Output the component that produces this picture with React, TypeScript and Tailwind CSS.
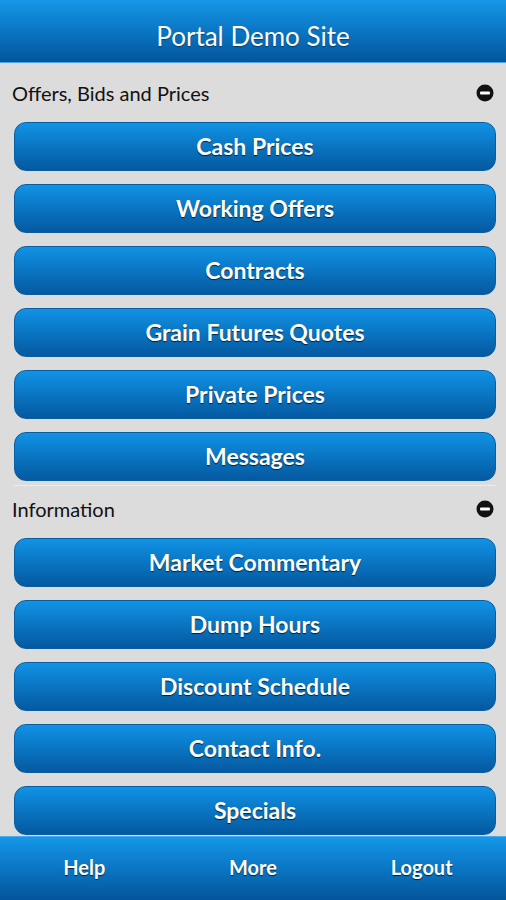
const OFFERS = [
  "Cash Prices",
  "Working Offers",
  "Contracts",
  "Grain Futures Quotes",
  "Private Prices",
  "Messages",
];

const INFO = [
  "Market Commentary",
  "Dump Hours",
  "Discount Schedule",
  "Contact Info.",
  "Specials",
];

function MinusIcon() {
  return (
    <svg width="18" height="18" viewBox="0 0 18 18" className="shrink-0">
      <circle cx="9" cy="9" r="8.5" fill="#111" />
      <rect x="4" y="7.5" width="10" height="3" rx="1" fill="#fff" />
    </svg>
  );
}

function NavButton({ label }: { label: string }) {
  return (
    <button className="h-[49px] w-full rounded-[12px] border border-[#0a5d9e] bg-gradient-to-b from-[#1193e6] to-[#0559a0] text-[23px] font-bold text-white [text-shadow:0_1px_1px_rgba(0,0,0,0.7)]">
      {label}
    </button>
  );
}

export default function App() {
  return (
    <div
      className="flex h-[900px] w-[506px] flex-col overflow-hidden bg-[#dcdcdc]"
      style={{ fontFamily: "Lato, 'Noto Sans', sans-serif" }}
    >
      <header className="flex h-[63px] shrink-0 items-center justify-center border-b border-[#4aa8ec] bg-gradient-to-b from-[#1597e8] via-[#0a76c4] to-[#04559a] pt-[10px]">
        <h1 className="text-[26px] font-normal text-white [text-shadow:0_1px_1px_rgba(0,0,0,0.4)]">
          Portal Demo Site
        </h1>
      </header>

      <section className="pl-[14px] pr-[10px]">
        <div className="flex h-[59px] items-center justify-between">
          <span className="-ml-[2px] text-[20px] text-[#111]">Offers, Bids and Prices</span>
          <span className="mr-[2px]">
            <MinusIcon />
          </span>
        </div>
        <div className="flex flex-col gap-[13px]">
          {OFFERS.map((o) => (
            <NavButton key={o} label={o} />
          ))}
        </div>
      </section>

      <section className="mt-[4px] pl-[14px] pr-[10px]">
        <div className="flex h-[53px] items-center justify-between border-t border-[#ececec] pb-[6px]">
          <span className="-ml-[2px] text-[20px] text-[#111]">Information</span>
          <span className="mr-[2px]">
            <MinusIcon />
          </span>
        </div>
        <div className="flex flex-col gap-[13px]">
          {INFO.map((o) => (
            <NavButton key={o} label={o} />
          ))}
        </div>
      </section>

      <footer className="mt-auto grid h-[64px] shrink-0 grid-cols-3 items-center border-t border-[#4aa8ec] bg-gradient-to-b from-[#1597e8] via-[#0a76c4] to-[#04559a] pb-[4px]">
        {["Help", "More", "Logout"].map((f) => (
          <span
            key={f}
            className="text-center text-[20px] font-bold text-white [text-shadow:0_1px_1px_rgba(0,0,0,0.7)]"
          >
            {f}
          </span>
        ))}
      </footer>
    </div>
  );
}
